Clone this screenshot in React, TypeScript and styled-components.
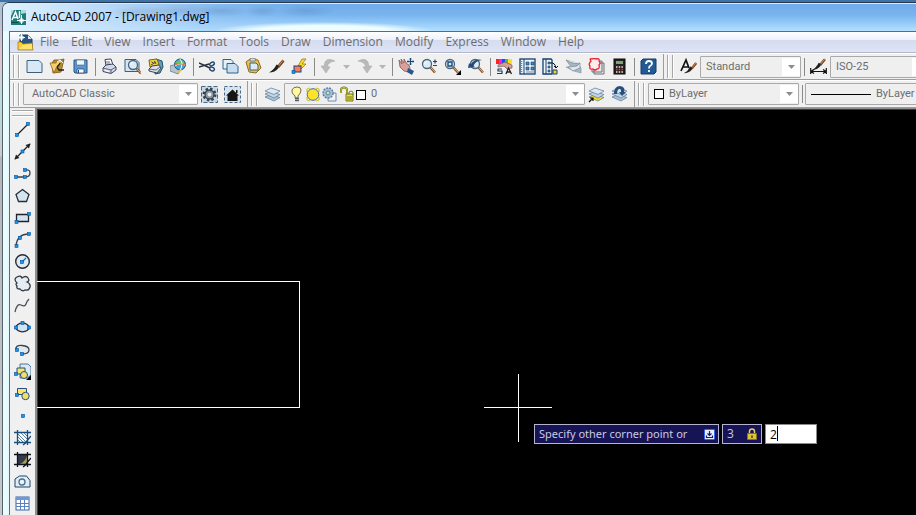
import React from "react";
import styled, { createGlobalStyle } from "styled-components";

const GlobalStyle = createGlobalStyle`
  *, *::before, *::after { box-sizing: border-box; }
  body { margin: 0; overflow: hidden; font: 12px/16px "Open Sans", "Noto Sans", sans-serif; }
  button, input, select { font: inherit; color: inherit; margin: 0; padding: 0; border: 0; background: none; }
`;

/* ---------- window frame ---------- */

const Desktop = styled.div`
  height: 100vh;
  padding: 2px 0 0 2px;
  background: linear-gradient(#3f73a8, #3f73a8) 0 0 / 100% 2px no-repeat,
    linear-gradient(#a7bfd8 0, #e3c6cc 60px, #b9dcdc 100px, #c9cdcd 156px, #b4b8ba 157px, #c4c8c8 100%);
`;

const Window = styled.main`
  height: 100%;
  display: flex;
  flex-direction: column;
  padding-left: 6px;
  border: 1px solid #25384d;
  border-color: #25384d #25384d #25384d #52616b;
  border-right: 0;
  border-bottom: 0;
  border-top-left-radius: 7px;
  background: linear-gradient(90deg, #effdff, #dff8fb 7px, #dff8fb);
  overflow: hidden;
`;

const TitleBar = styled.header`
  flex: none;
  height: 28px;
  margin-left: -6px;
  padding: 0 0 1px 8px;
  display: flex;
  align-items: center;
  gap: 5px;
  border-top: 1px solid #d5edff;
  background: radial-gradient(ellipse 110px 9px at 320px 27px, #effdff 60%, transparent),
    radial-gradient(ellipse 30px 6px at 135px 8px, #6a8db044, transparent),
    radial-gradient(ellipse 40px 6px at 180px 7px, #6a8db044, transparent),
    radial-gradient(ellipse 26px 6px at 219px 7px, #4d77a844, transparent),
    radial-gradient(ellipse 18px 6px at 259px 7px, #4d77a844, transparent),
    radial-gradient(ellipse 30px 6px at 303px 7px, #4d77a844, transparent),
    linear-gradient(90deg, #e0f2fe 0, #c9e2fabb 120px, #a8d0f666 210px, transparent 300px),
    linear-gradient(#71abe8, #78b4f0 40%, #b3e0ff);
`;

const Title = styled.h1`
  margin: 0;
  font-size: 12px;
  line-height: 16px;
  font-weight: 400;
  color: #000;
`;

const Client = styled.div`
  flex: 1;
  min-height: 0;
  display: flex;
  flex-direction: column;
  border: 1px solid #5b6b78;
  border-width: 1px 0 0 1px;
  background: #f0f0f0;
`;

const MenuBar = styled.nav`
  flex: none;
  height: 21px;
  display: flex;
  align-items: center;
  padding-left: 7px;
  border-bottom: 1px solid #b4b8cc;
  background: linear-gradient(#ffffff, #eef1fa 38%, #d5dcf0 42%, #dfe4f5);
`;

const MenuButton = styled.button`
  padding: 0 6px;
  height: 20px;
  color: #6d6d6d;
  white-space: nowrap;
`;

/* ---------- toolbars ---------- */

const ToolbarRow = styled.div<{ $tall?: boolean }>`
  flex: none;
  height: ${(p) => (p.$tall ? "28px" : "27px")};
  display: flex;
  border-top: 1px solid #fff;
  border-bottom: 1px solid #9c9c9c;
  overflow: hidden;
`;

const Toolbar = styled.div<{ $open?: boolean }>`
  flex: ${(p) => (p.$open ? "1 0 auto" : "none")};
  display: flex;
  align-items: center;
  padding-right: ${(p) => (p.$open ? "0" : "3px")};
  border-right: ${(p) => (p.$open ? "0" : "1px solid #9c9c9c")};
`;

const Grip = styled.span<{ $flat?: boolean }>`
  flex: none;
  width: ${(p) => (p.$flat ? "21px" : "6px")};
  height: ${(p) => (p.$flat ? "6px" : "23px")};
  margin: ${(p) => (p.$flat ? "2px" : "0 4px 0 3px")};
  border: solid #a6a6a6;
  border-width: ${(p) => (p.$flat ? "1px 0" : "0 1px")};
  box-shadow: ${(p) => (p.$flat ? "0 1px 0 #fff, inset 0 1px 0 #fff" : "1px 0 0 #fff, inset 1px 0 0 #fff")};
`;

const Divider = styled.span`
  flex: none;
  width: 1px;
  height: 18px;
  margin: 0 2px 0 3px;
  background: #8a8a8a;
`;

const ToolButton = styled.button`
  flex: none;
  width: 23px;
  height: 22px;
  display: grid;
  place-items: center;
`;

const DropArrow = styled.button`
  flex: none;
  width: 13px;
  height: 22px;
  display: grid;
  place-items: center;
`;

const ComboFrame = styled.div<{ $w: string }>`
  flex: none;
  width: ${(p) => p.$w};
  height: 22px;
  display: grid;
  grid-template-columns: auto 1fr 18px;
  align-items: center;
  padding: 1px 0 1px 1px;
  border: 1px solid #a9a9a9;
  border-radius: 1px;
  background: linear-gradient(90deg, #efefef calc(100% - 18px), #ffffff 0) content-box #fff;
  color: #6d6d6d;
  font: 11px/16px Roboto, "Liberation Sans", sans-serif;
`;

const ComboSelect = styled.select`
  grid-column: 1 / -1;
  grid-row: 1;
  appearance: none;
  height: 18px;
  width: 100%;
  padding: 0 20px 0 4px;
  text-overflow: ellipsis;
`;

const WorkspaceSelect = styled(ComboSelect)`
  padding-left: 7px;
`;

const ShiftedSelect = styled(ComboSelect)`
  grid-column: 2 / -1;
`;

const ComboLead = styled.span`
  grid-column: 1;
  grid-row: 1;
  display: flex;
  align-items: center;
  padding-left: 3px;
`;

const ComboArrow = styled.span`
  grid-column: 3;
  grid-row: 1;
  display: grid;
  justify-self: center;
  pointer-events: none;
`;

/* ---------- work area ---------- */

const WorkArea = styled.div`
  flex: 1;
  min-height: 0;
  display: flex;
`;

const Palette = styled.aside`
  flex: none;
  width: 25px;
  display: flex;
  flex-direction: column;
  align-items: center;
`;

const Canvas = styled.section`
  flex: 1;
  position: relative;
  overflow: hidden;
  background: #000;
  border: solid #8d8d8d;
  border-width: 1px 0 0 2px;
  box-shadow: inset 1px 1px 0 #3c3c3c;
`;

const Drawing = styled.svg`
  display: block;
  width: 100%;
  height: 100%;
`;

const DynamicInput = styled.form`
  position: absolute;
  left: 497px;
  top: 315px;
  display: flex;
  gap: 3px;
  color: #c9c9e2;
  white-space: nowrap;
`;

const Prompt = styled.div`
  height: 20px;
  width: 185px;
  display: flex;
  align-items: center;
  justify-content: space-between;
  padding: 0 3px 0 4px;
  border: 1px solid #b4b4cf;
  background: #171455;
  font: 11px/16px "Noto Sans", "Open Sans", sans-serif;
`;

const LockedValue = styled.label`
  height: 20px;
  width: 40px;
  display: flex;
  align-items: center;
  justify-content: space-between;
  padding: 0 4px;
  border: 1px solid #b4b4cf;
  background: #171455;
`;

const LockedInput = styled.input`
  width: 16px;
  min-width: 0;
`;

const LiveValue = styled.label`
  height: 20px;
  width: 52px;
  position: relative;
  border: 1px solid #8a8a8a;
  background: #fff;
  color: #000;
`;

const LiveInput = styled.input`
  width: 100%;
  height: 18px;
  padding-left: 4px;
  outline: 0;
  caret-color: transparent;
`;

const Caret = styled.span`
  position: absolute;
  left: 11px;
  top: 1px;
  width: 1px;
  height: 15px;
  background: #000;
`;

/* ---------- icons ---------- */

const Glyph = ({ children }: { children: React.ReactNode }) => (
  <svg width="17" height="17" viewBox="0 0 17 17" fill="none" aria-hidden="true">
    {children}
  </svg>
);

const Node = ({ x, y }: { x: number; y: number }) => (
  <rect x={x - 1.5} y={y - 1.5} width="3" height="3" fill="#1496ee" stroke="#07509c" strokeWidth=".6" />
);

const Tri = ({ color = "#8d8d8d" }: { color?: string }) => (
  <svg width="7" height="4" viewBox="0 0 7 4" aria-hidden="true">
    <path d="M0 0h7L3.500 4z" fill={color} />
  </svg>
);

const NAVY = "#1d4469";
const PALE = "#d3e4f0";

const Layers = ({ mid = "#a9c2d8" }: { mid?: string }) => (
  <>
    <path d="M1 11l6-2.500 9 3-6 3.500z" fill={mid} stroke="#587896" strokeWidth=".7" />
    <path d="M1 8l6-2.500 9 3-6 3.500z" fill="#c3d5e4" stroke="#587896" strokeWidth=".7" />
    <path d="M1 5l6-3 9 3-6 3.500z" fill="#dce8f2" stroke="#587896" strokeWidth=".7" />
  </>
);

const Printer = () => (
  <>
    <path d="M5 8L4 1.500l6-.5 2 6" fill="#fff" stroke="#3c4560" />
    <path d="M2 10l3-3 7-1 3 3v3l-5 3.500-8-2z" fill="#d5d9e6" stroke="#3c4560" />
    <path d="M2 10l8 2 5-3M10 12v3M5 4h4M5.500 6h4" stroke="#3c4560" strokeWidth=".8" />
    <path d="M4 12.500l4 1" stroke="#fff" />
  </>
);

const Lens = ({ x = 7, y = 6 }: { x?: number; y?: number }) => (
  <>
    <path d={`M${x + 3} ${y + 3}l5 5.500`} stroke="#8a5a33" strokeWidth="2.600" />
    <path d={`M${x + 3} ${y + 3}l5 5`} stroke="#d9a874" strokeWidth="1" />
    <circle cx={x} cy={y} r="4.500" fill="#dcecf7" stroke="#49647f" strokeWidth="1.300" />
    <path d={`M${x - 2.5} ${y}q.5-2 2.500-2.500`} stroke="#fff" />
  </>
);

const Brush = () => (
  <>
    <path d="M15.500 2.500L10 9" stroke="#7a4423" strokeWidth="2.800" />
    <path d="M15.500 2L10.500 8" stroke="#d98e4b" strokeWidth="1" />
    <path d="M10.500 7.500l-2-1Q6 12 1 14.500q6 0 9.500-4.500z" fill="#202020" />
  </>
);

const Cursor = () => <path d="M17 12v5h-5z" fill="#000" />;

const Hatch = ({ dark }: { dark?: boolean }) => (
  <>
    <rect x="3.500" y="3.500" width="10" height="10" fill={dark ? "#35394c" : "#fff"} />
    {dark ? (
      <path d="M13.500 3.500v10h-9q7-2 9-10z" fill="#aaa24e" />
    ) : (
      <path d="M4 5l8 8M4 8l5 5M4 11l2 2M7 4l6 6M10 4l3 3" stroke="#2f6492" strokeWidth=".8" />
    )}
    <path d="M3.500 1v15M13.500 1v15M0 3.500h17M0 13.500h17M12 13l5-6M9 16l4-3" stroke={dark ? "#10131c" : "#194d7c"} strokeWidth="1.300" />
  </>
);

const Plot = ({ children }: { children?: React.ReactNode }) => (
  <>
    <rect x="1" y="1" width="15" height="15" fill="#f2f6fa" stroke="#123e6c" strokeWidth="1.300" />
    <path d="M5 1v15" stroke="#123e6c" />
    <path d="M2.500 3v11" stroke="#4d87bd" strokeDasharray="1 1" strokeWidth="1.500" />
    <path d="M7 4h3v3H7zM12 4h3v3h-3zM7 9h3v3H7zM12 9h3v3h-3z" fill="#4b86b7" stroke="#14426d" strokeWidth=".6" />
    <path d="M7 14h8" stroke="#6c8aa7" />
    {children}
  </>
);

const icons: Record<string, React.ReactNode> = {
  New: <path d="M1 2.500h12l3 3v9H1z" fill="#d8e9f5" stroke="#39617f" />,
  Open: (
    <>
      <path d="M3 5l2-3h6l4-1-3 13-8 1z" fill="#b98b31" stroke="#8a6723" />
      <path d="M1 5h6l1-2 7-1-7 6-3 7z" fill="#f1cf6f" stroke="#8d6a24" strokeWidth=".8" />
      <path d="M15 12l-5 0q-3-3 0-5l1-2" stroke="#202020" strokeWidth="1.300" />
      <path d="M8 4l3-2 3 3" stroke="#fff" />
    </>
  ),
  Save: (
    <>
      <path d="M2 2h13v13H3l-1-1z" fill="#5d95cf" stroke="#2b5482" />
      <path d="M4.500 2h8v5h-8z" fill="#eef5fa" stroke="#356697" strokeWidth=".6" />
      <path d="M5 11h7v4H5z" fill="#fff" stroke="#254b76" strokeWidth=".8" />
      <path d="M6.500 12v3" stroke="#254b76" />
    </>
  ),
  Plot: <Printer />,
  "Plot Preview": (
    <>
      <path d="M1 1.500h11l3 3v9H1z" fill="#d3e6f3" stroke="#39617f" />
      <g transform="translate(3 2)"><Lens x={6} y={5} /></g>
    </>
  ),
  Publish: (
    <>
      <path d="M9 1l6 2 1 6-3 6-5 1z" fill="#5ba0b7" stroke="#264f68" />
      <path d="M3 9L2 2l8-1 2 6z" fill="#f3d23e" stroke="#7a661d" />
      <path d="M4.500 4l2 1M7 3l2 3M4 7l5-3" stroke="#4c4a30" />
      <path d="M2 11l3-3 7-1 2 3-4 5-8-2z" fill="#dde0e9" stroke="#3c4560" />
      <path d="M2 11l7 1 4-3" stroke="#3c4560" strokeWidth=".8" />
    </>
  ),
  "3D DWF": (
    <>
      <path d="M0 8l7-2 4 5-3 5-8-3z" fill="#b8c4d0" stroke="#5b7083" strokeWidth=".7" />
      <circle cx="10" cy="6.500" r="5.500" fill="#40a3da" stroke="#1f5d7c" />
      <path d="M5 5q5-5 9-1 -1 3-4 2t-5-1z" fill="#6fc35b" />
      <path d="M5 8q5-4 10-1M10 1q4 5 0 11" stroke="#fff" />
      <path d="M4.500 7Q9 4 15.500 7" stroke="#eb722e" />
      <path d="M6 14l4 1 2-4z" fill="#e7c83d" />
    </>
  ),
  Cut: (
    <>
      <path d="M0 5l11 5M0 9l10-3" stroke="#282f3b" strokeWidth="1.400" />
      <ellipse cx="13" cy="6" rx="2.500" ry="1.600" stroke="#254a73" strokeWidth="1.400" transform="rotate(-30 13 6)" />
      <ellipse cx="13" cy="11" rx="2.500" ry="1.700" stroke="#254a73" strokeWidth="1.400" transform="rotate(25 13 11)" />
    </>
  ),
  Copy: (
    <>
      <path d="M1 1.500h8l2 2V11H1z" fill="#e6f0f8" stroke="#2e628f" />
      <path d="M5 5.500h8l3 3V15H5z" fill="#c7ddee" stroke="#2e628f" />
    </>
  ),
  Paste: (
    <>
      <path d="M1 4l4-3 8 1 3 8-5 5-7-1z" fill="#e8c14c" stroke="#8b6b20" />
      <path d="M5 1l2-1 4 1-1 2H5z" fill="#ddd" stroke="#666" strokeWidth=".7" />
      <path d="M5 5h6l2 2v5H5z" fill="#dcebf6" stroke="#2e628f" />
    </>
  ),
  "Match Properties": <Brush />,
  "Block Editor": (
    <>
      <path d="M11 1L7 8h3l-2 5 7-7h-4l4-5z" fill="#ffdc28" stroke="#8a6b00" strokeWidth=".7" />
      <rect x="3" y="8" width="7" height="6" fill="#f27f58" stroke="#263f75" />
      <Node x={2.5} y={14} />
    </>
  ),
  Undo: <path d="M1 8l5 7 4-6-2.500-.5Q8 4 15 3 5-2 4 8z" fill="#b9b9b9" stroke="#a8a8a8" strokeWidth=".5" />,
  Redo: <path d="M16 8l-5 7-4-6 2.500-.5Q9 4 2 3q10-5 11 5z" fill="#b9b9b9" stroke="#a8a8a8" strokeWidth=".5" />,
  Pan: (
    <>
      <path d="M1 2l3 4-1-5 3 4V1l3 5 2 1 1 3-1 4-5-1-4-4z" fill="#d6a19a" stroke="#875650" strokeWidth=".8" />
      <path d="M10 10l6 3-2 4-5-3z" fill="#28598b" />
      <path d="M12.500 0v7M9 3.500h7M11.500 1h2M11.500 6h2M10 2.500v2M15 2.500v2" stroke="#174977" strokeWidth="1.200" />
    </>
  ),
  "Zoom Realtime": (
    <>
      <g transform="translate(-1 0)"><Lens /></g>
      <path d="M12 3.500h4M14 1.500v4M12 7.500h4" stroke="#174977" strokeWidth="1.200" />
    </>
  ),
  "Zoom Window": (
    <>
      <g transform="translate(-1 0)"><Lens /></g>
      <path d="M4 4h4v4H4z" stroke="#174977" strokeWidth="1.400" />
      <Cursor />
    </>
  ),
  "Zoom Previous": (
    <>
      <g transform="translate(1 0)"><Lens /></g>
      <path d="M1 10l1-5 1.500 1.500Q8 0 15 2 8 3 6.500 8L8 9z" fill="#224b75" />
    </>
  ),
  Properties: (
    <>
      <path d="M0 1h3v5H0z" fill="#f22" /><path d="M3 1h3v5H3z" fill="#e2e" /><path d="M6 1h3v5H6z" fill="#24f" />
      <path d="M9 1h3v5H9z" fill="#2c5" /><path d="M12 1h4v5h-4z" fill="#fd2" />
      <path d="M2 7l7-3 7 3v3l-5 1-3-3-6 1z" fill="#d5a094" stroke="#81564e" strokeWidth=".7" />
      <path d="M6 11H2v2h4v2.500H1" stroke="#1c3e68" strokeWidth="1.200" />
      <path d="M10 16l2.500-6 3 6M11 14h4" stroke="#222" strokeWidth="1.300" />
    </>
  ),
  DesignCenter: <Plot />,
  "Tool Palettes": (
    <>
      <path d="M1 1h8l1 1v14H1z" fill="#f2f6fa" stroke="#123e6c" strokeWidth="1.300" />
      <path d="M4 1v15" stroke="#123e6c" />
      <path d="M6 4h2v2H6zM6 8h2v2H6zM6 12h2v2H6z" fill="#4b86b7" stroke="#14426d" strokeWidth=".6" />
      <path d="M8 5q5-1 6 5M12 8l2 2 2-2" stroke="#111" />
      <path d="M11 12h4v4h-4z" fill="#f2cf42" stroke="#14426d" />
    </>
  ),
  "Sheet Set Manager": (
    <>
      <path d="M1 2l11 3 4 5v5l-7-2-8-4 5 0z" fill="#a8b8c3" stroke="#7d8e9a" strokeWidth=".6" />
      <path d="M1 2q8 5 14 3M3 9l9-1 3-3v5l-7 3z" fill="#dde6ec" stroke="#73868f" strokeWidth=".7" />
    </>
  ),
  "Markup Set Manager": (
    <>
      <path d="M6 5h10v11H6zM4 3h10v11H4z" fill="#e8e8ec" stroke="#6c7079" />
      <path d="M1 1h11v11H1z" fill="#f7eef0" />
      <path d="M3 3q-2-3 1-2 2-1 4 0 4-1 3 2 2 2 0 4 1 4-2 4-2 2-4 0-4 1-3-3-2-2 1-5z" fill="#fdeeee" stroke="#eb2230" strokeWidth="1.300" />
    </>
  ),
  QuickCalc: (
    <>
      <rect x="3" y="1" width="11" height="15" fill="#26211e" stroke="#0a0a0a" />
      <path d="M5 3h7v3H5z" fill="#7aa574" />
      <path d="M5 9h7M5 14h7" stroke="#e9e9e9" strokeWidth="1.500" strokeDasharray="1.500 1.200" />
      <path d="M5 11.500h7" stroke="#ed3434" strokeWidth="1.500" strokeDasharray="1.500 1.200" />
    </>
  ),
  Help: (
    <>
      <path d="M1 3l2-2h13v13l-2 2H1z" fill="#215a94" stroke="#163c66" />
      <path d="M6 6q0-3 3-3t3 2.500q0 1.500-2 2.500-1 .7-1 2.500M9 12v2" stroke="#fff" strokeWidth="1.800" />
    </>
  ),
  "Text Style": (
    <>
      <path d="M1 13L6 2l3 8M3 9h6" stroke="#111" strokeWidth="1.700" />
      <g transform="translate(3 3) scale(.85)"><Brush /></g>
    </>
  ),
  "Dimension Style": (
    <>
      <g transform="translate(1 -1) scale(.9)"><Brush /></g>
      <path d="M.7 10v6M16.300 10v6M1 13.500h15M4 11.500l-3 2 3 2M13 11.500l3 2-3 2" stroke="#111" strokeWidth="1.200" />
    </>
  ),
  "Workspace Settings": (
    <>
      <path d="M.5.5h16v16H.5z" fill="#c7d8e7" stroke="#45688b" strokeDasharray="4 2" />
      <circle cx="8.500" cy="8.500" r="5.500" stroke="#38424c" strokeWidth="3" strokeDasharray="2.300 2" />
      <circle cx="8.500" cy="8.500" r="4.500" fill="#8d979f" stroke="#39434d" strokeWidth="1.300" />
      <circle cx="8.500" cy="8.500" r="2" fill="#e3edf5" />
    </>
  ),
  "My Workspace": (
    <>
      <path d="M.5.5h16v16H.5z" fill="#d7e2ec" stroke="#45688b" strokeDasharray="3 2" />
      <path d="M2 9.500L8.500 3.500 15 9.500h-1.500V15h-10V9.500z" fill="#161616" />
      <path d="M12 4h1.500v3H12z" fill="#161616" />
    </>
  ),
  "Layer Properties Manager": <Layers />,
  "Make Object's Layer Current": (
    <>
      <Layers mid="#f3d727" />
      <path d="M1 16l4-4M2 12h3v3" stroke="#111" strokeWidth="1.200" />
    </>
  ),
  "Layer Previous": (
    <>
      <Layers />
      <path d="M3 8q0-8 6-8 6 1 4 6l2 0-4 4-3-4h2q0-4-2-3-2 1-2 5z" fill="#24517e" />
    </>
  ),
  Line: (<><path d="M2 15L14 3" stroke="#222" strokeWidth="1.300" /><Node x={3} y={14} /><Node x={14} y={3} /></>),
  "Construction Line": (
    <><path d="M1 16L16 1" stroke="#222" strokeWidth="1.300" /><path d="M16.500.5l-1.500 5L11.500 2zM.5 16.500L2 11.500 5.500 15z" fill="#222" /><Node x={8.500} y={8.500} /></>
  ),
  Polyline: (<><path d="M2 12h9M11 5q5-1 5 3t-5 4" stroke="#3a3f4c" strokeWidth="1.300" /><Node x={2} y={12} /><Node x={11} y={12} /><Node x={11} y={5} /></>),
  Polygon: <path d="M8.500 2.500l6.500 5L12.500 14.500h-8L2 7.500z" fill="#d3e6ee" stroke="#2b2f3c" strokeWidth="1.300" />,
  Rectangle: (<><path d="M2.500 5.500h12v7h-12z" fill={PALE} stroke="#20232c" strokeWidth="1.300" /><Node x={15} y={5} /><Node x={2.500} y={13} /></>),
  Arc: (<><path d="M2 15Q3 3 15 3" stroke="#3a3f4c" strokeWidth="1.300" /><Node x={2.500} y={15} /><Node x={6} y={7} /><Node x={15} y={3} /></>),
  Circle: (<><circle cx="8.500" cy="8.500" r="6.800" fill="#dfeaf2" stroke="#252b38" strokeWidth="1.400" /><path d="M8 9l4-4" stroke="#1672b9" strokeWidth="1.300" /><Node x={8} y={9} /></>),
  "Revision Cloud": (
    <path d="M3 8Q-1 4 3 2t5 1q4-3 6 0t-1 4q4 2 3 5-1 4-5 3-3 2-5-1-4 0-3-3-2-2 0-3z" fill="#e5edf3" stroke="#353a48" strokeWidth="1.300" />
  ),
  Spline: <path d="M1 15q2-9 6-7t5-1 3-5" stroke="#4b5058" strokeWidth="1.300" />,
  Ellipse: (<><ellipse cx="8.500" cy="8.500" rx="6.500" ry="4.300" fill={PALE} stroke="#272d3a" strokeWidth="1.300" /><Node x={2} y={8.500} /><Node x={15} y={8.500} /><Node x={8.500} y={4} /></>),
  "Ellipse Arc": (<><path d="M8 13q7 0 7-4T8 4.500 2 9" fill="#dfe9f0" stroke="#3d4452" strokeWidth="1.300" /><Node x={3} y={9} /><Node x={8} y={13} /></>),
  "Insert Block": (
    <>
      <path d="M6 1h8l3 3v8l-4 3H6z" fill="#dbe9f4" stroke="#4d789d" />
      <path d="M3 5h8v6H3z" fill="#f6e56f" stroke="#28507b" />
      <circle cx="10" cy="12" r="3.500" fill="#f1df68" stroke="#28507b" />
      <Node x={2} y={11} /><Cursor />
    </>
  ),
  "Make Block": (
    <>
      <path d="M3.500 3.500h9v6h-9z" fill="#f6e56f" stroke="#28507b" />
      <circle cx="11.500" cy="11" r="3.700" fill="#f1df68" stroke="#28507b" />
      <Node x={3} y={10} />
    </>
  ),
  Point: <Node x={9} y={9} />,
  Hatch: <Hatch />,
  Gradient: <Hatch dark />,
  Region: (<><path d="M1 14v-8L5.500 3h7L16 7.500V14z" fill="#e0edf5" stroke={NAVY} /><circle cx="8" cy="9" r="3" fill="#eef5f9" stroke="#4b6f8f" strokeWidth="1.300" /></>),
  Table: (
    <>
      <rect x="2" y="2" width="13" height="13" fill="#fff" stroke="#3a62a1" />
      <path d="M2 2h13v3H2z" fill="#6f98d6" />
      <path d="M2 8.500h13M2 11.500h13M6.500 5v10M10.500 5v10" stroke="#5b82bd" />
    </>
  ),
};

/* ---------- parts ---------- */

const Tools = ({ names }: { names: string[] }) => (
  <>
    {names.map((n) => (
      <ToolButton key={n} type="button" aria-label={n} title={n}>
        <Glyph>{icons[n]}</Glyph>
      </ToolButton>
    ))}
  </>
);

interface ComboProps {
  label: string;
  value: string;
  width: string;
  lead?: React.ReactNode;
  workspace?: boolean;
}

const Combo = ({ label, value, width, lead, workspace }: ComboProps) => {
  const Select = lead ? ShiftedSelect : workspace ? WorkspaceSelect : ComboSelect;
  return (
    <ComboFrame $w={width}>
      {lead && <ComboLead>{lead}</ComboLead>}
      <Select aria-label={label} defaultValue={value}>
        <option>{value}</option>
      </Select>
      <ComboArrow>
        <Tri />
      </ComboArrow>
    </ComboFrame>
  );
};

const ColorBox = () => (
  <svg width="12" height="12" viewBox="0 0 12 12" aria-hidden="true">
    <rect x="1.500" y="1.500" width="9" height="9" fill="#fff" stroke="#000" />
  </svg>
);

const LayerState = () => (
  <svg width="78" height="17" viewBox="0 0 78 17" fill="none" aria-hidden="true">
    <path d="M6 12V10Q2 7 3 4t5-3 4 3-3 6v2z" fill="#fff7a4" stroke="#76713b" />
    <path d="M6 12.500h4M6 14.500h4" stroke="#555a6c" strokeWidth="1.300" />
    <path d="M18 3l3-1M18 3v3M30 3l-3-1M30 3v3M18 14l3 1M18 14v-3M30 14l-3 1M30 14v-3" stroke="#d5c42a" strokeWidth="1.300" />
    <circle cx="24" cy="8.500" r="5.800" fill="#ffe32b" stroke="#3d6f96" />
    <path d="M40 7h7v8h-8v-4" fill="#f0f2f5" stroke="#6e8eac" />
    <circle cx="39" cy="7" r="5" fill="#a6c0d8" stroke="#5d82a5" strokeDasharray="2 1" strokeWidth="1.500" />
    <circle cx="39" cy="7" r="2" fill="#d8dfa7" stroke="#5d82a5" />
    <path d="M52 7V4q0-2.500 3-2.500T58 4v4" stroke="#77761c" strokeWidth="2" />
    <path d="M52 7V4q0-2.500 3-2.500T58 4v4" stroke="#dfd936" strokeWidth=".8" />
    <path d="M57 8h7v7h-7z" fill="#e5de3e" stroke="#77761c" />
    <path d="M60 8V6q2-2 4 0v3M58 11h5M58 13h5" stroke="#77761c" />
    <rect x="67.500" y="4.500" width="9" height="9" fill="#fff" stroke="#000" />
  </svg>
);

const AppLogo = () => (
  <svg width="15" height="15" viewBox="0 0 15 15" fill="none" aria-hidden="true">
    <path d="M0 0h15v15H0z" fill="#1b7c78" />
    <path d="M0 0h3L0 6zM10 0h5v3L10 4z" fill="#a9dcd7" />
    <path d="M1 10L4.500 2 7 9M2.500 7.500h4M8.500 1v7" stroke="#fff" strokeWidth="1.500" />
    <path d="M10.500 5v9M6 10.500h9M9 9h3v3H9z" stroke="#fff" />
    <path d="M0 12.500h7" stroke="#0d4e4d" />
  </svg>
);

const DrawingIcon = () => (
  <svg width="17" height="17" viewBox="0 0 17 17" fill="none" aria-hidden="true">
    <path d="M3 1h8l4 4v8H3z" fill="#29567f" stroke="#163c63" />
    <path d="M1 16V8h3l2 2 9-1 1 7z" fill="#ffcf32" stroke="#a3700c" strokeWidth=".7" />
    <path d="M2 15l4-4 9-1v5z" fill="#ffe36f" />
    <path d="M4.500 0v7M1 3.500h7M3 2h3v3H3z" stroke="#fff" />
    <path d="M11 1v4h4" fill="#d6e4ef" />
  </svg>
);

const DownIcon = () => (
  <svg width="11" height="11" viewBox="0 0 11 11" fill="none" aria-hidden="true">
    <rect x=".5" y=".5" width="10" height="10" rx="1" fill="#e8eeff" stroke="#3763ff" />
    <path d="M5.500 2v4M3.500 4.500l2 2 2-2M2.500 6.500v2h6v-2" stroke="#141d5e" strokeWidth="1.200" />
  </svg>
);

const LockIcon = () => (
  <svg width="10" height="12" viewBox="0 0 10 12" fill="none" aria-hidden="true">
    <path d="M2.500 6V3.500Q2.500 1 5 1t2.500 2.500V6" stroke="#e0cf64" strokeWidth="1.500" />
    <path d="M.5 5.500h9v6h-9z" fill="#e0c33a" stroke="#8c7416" />
    <path d="M5 7.500v2.500" stroke="#463a08" strokeWidth="1.500" />
  </svg>
);

const menus = ["File", "Edit", "View", "Insert", "Format", "Tools", "Draw", "Dimension", "Modify", "Express", "Window", "Help"];

const drawTools = [
  "Line", "Construction Line", "Polyline", "Polygon", "Rectangle", "Arc", "Circle", "Revision Cloud", "Spline",
  "Ellipse", "Ellipse Arc", "Insert Block", "Make Block", "Point", "Hatch", "Gradient", "Region", "Table",
];

export default function App() {
  return (
    <>
      <GlobalStyle />
      <Desktop>
        <Window>
          <TitleBar>
            <AppLogo />
            <Title>AutoCAD 2007 - [Drawing1.dwg]</Title>
          </TitleBar>
          <Client>
            <MenuBar aria-label="Main menu">
              <DrawingIcon />
              {menus.map((m) => (
                <MenuButton key={m} type="button">{m}</MenuButton>
              ))}
            </MenuBar>
            <ToolbarRow>
              <Toolbar role="toolbar" aria-label="Standard">
                <Grip />
                <Tools names={["New", "Open", "Save"]} />
                <Divider />
                <Tools names={["Plot", "Plot Preview", "Publish", "3D DWF"]} />
                <Divider />
                <Tools names={["Cut", "Copy", "Paste", "Match Properties", "Block Editor"]} />
                <Divider />
                <Tools names={["Undo"]} />
                <DropArrow type="button" aria-label="Undo list"><Tri color="#b5b5b5" /></DropArrow>
                <Tools names={["Redo"]} />
                <DropArrow type="button" aria-label="Redo list"><Tri color="#b5b5b5" /></DropArrow>
                <Divider />
                <Tools names={["Pan", "Zoom Realtime", "Zoom Window", "Zoom Previous"]} />
                <Divider />
                <Tools names={["Properties", "DesignCenter", "Tool Palettes", "Sheet Set Manager", "Markup Set Manager", "QuickCalc"]} />
                <Divider />
                <Tools names={["Help"]} />
              </Toolbar>
              <Toolbar $open role="toolbar" aria-label="Styles">
                <Grip />
                <Tools names={["Text Style"]} />
                <Combo label="Text style" value="Standard" width="101px" />
                <Divider />
                <Tools names={["Dimension Style"]} />
                <Combo label="Dimension style" value="ISO-25" width="101px" />
              </Toolbar>
            </ToolbarRow>
            <ToolbarRow $tall>
              <Toolbar role="toolbar" aria-label="Workspaces">
                <Grip />
                <Combo label="Workspace" value="AutoCAD Classic" width="175px" workspace />
                <Tools names={["Workspace Settings", "My Workspace"]} />
              </Toolbar>
              <Toolbar role="toolbar" aria-label="Layers">
                <Grip />
                <Tools names={["Layer Properties Manager"]} />
                <Combo label="Layer" value="0" width="301px" lead={<LayerState />} />
                <Tools names={["Make Object's Layer Current", "Layer Previous"]} />
              </Toolbar>
              <Toolbar $open role="toolbar" aria-label="Object properties">
                <Grip />
                <Combo label="Color" value="ByLayer" width="151px" lead={<ColorBox />} />
                <Divider />
                <Combo
                  label="Linetype"
                  value="ByLayer"
                  width="151px"
                  lead={
                    <svg width="62" height="3" viewBox="0 0 62 3" aria-hidden="true">
                      <path d="M1 1.500h60" stroke="#000" />
                    </svg>
                  }
                />
              </Toolbar>
            </ToolbarRow>
            <WorkArea>
              <Palette role="toolbar" aria-label="Draw">
                <Grip $flat />
                <Tools names={drawTools} />
              </Palette>
              <Canvas aria-label="Drawing area">
                <Drawing shapeRendering="crispEdges" fill="none" stroke="#fff">
                  <path d="M0 172.500H262.500V298.500H0" />
                  <path d="M447 298.500h68M481.500 265v68" />
                </Drawing>
                <DynamicInput>
                  <Prompt>
                    Specify other corner point or
                    <DownIcon />
                  </Prompt>
                  <LockedValue>
                    <LockedInput aria-label="Width" defaultValue="3" readOnly />
                    <LockIcon />
                  </LockedValue>
                  <LiveValue>
                    <LiveInput aria-label="Height" defaultValue="2" />
                    <Caret />
                  </LiveValue>
                </DynamicInput>
              </Canvas>
            </WorkArea>
          </Client>
        </Window>
      </Desktop>
    </>
  );
}
